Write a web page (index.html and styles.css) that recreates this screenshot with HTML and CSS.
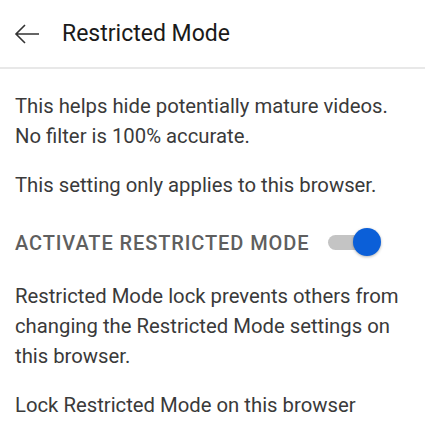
FILE: index.html
```html
<!DOCTYPE html>
<html>
<head>
<meta charset="utf-8">
<link rel="stylesheet" href="styles.css">
</head>
<body>
<div class="page">
  <header class="header">
    <svg class="back" width="28" height="22" viewBox="0 0 28 22">
      <path d="M26 11H3M12 2L3 11l9 9" fill="none" stroke="#333" stroke-width="1.6"/>
    </svg>
    <h1 class="title">Restricted Mode</h1>
  </header>
  <main class="content">
    <p class="text p1">This helps hide potentially mature videos.<br>No filter is 100% accurate.</p>
    <p class="text p2">This setting only applies to this browser.</p>
    <div class="toggle-row">
      <span class="label">ACTIVATE RESTRICTED MODE</span>
      <span class="toggle"><span class="track"></span><span class="thumb"></span></span>
    </div>
    <p class="text p3">Restricted Mode lock prevents others from changing the Restricted Mode settings on this browser.</p>
    <p class="text p4">Lock Restricted Mode on this browser</p>
  </main>
</div>
</body>
</html>
```
FILE: styles.css
```css
* { box-sizing: border-box; }
html, body { margin: 0; padding: 0; background: #fff; }
body { font-family: Roboto, "Noto Sans", sans-serif; }
.page { width: 425px; height: 442px; overflow: hidden; }
.header {
  height: 69px;
  display: flex;
  align-items: center;
  padding-left: 13px;
  border-bottom: 2px solid #e8e8e8;
}
.back { display: block; margin-right: 21px; }
.title { margin: 0; font-size: 23px; font-weight: 400; color: #1a1a1a; }
.content { padding: 0 15px; }
.text {
  margin: 0;
  font-size: 20.3px;
  line-height: 30px;
  color: #3a3a3a;
}
.p1 { margin-top: 22px; }
.p2 { margin-top: 19px; }
.p3 { margin-top: 20px; }
.p4 { margin-top: 19px; }
.toggle-row {
  display: flex;
  align-items: center;
  height: 36px;
  margin-top: 25px;
}
.label {
  font-size: 20px;
  font-weight: 500;
  letter-spacing: 0.9px;
  color: #5f5f5f;
}
.toggle { position: relative; width: 54px; height: 30px; margin-left: 19px; }
.track {
  position: absolute; left: 0; top: 7px;
  width: 46px; height: 15px; border-radius: 8px; background: #c4c4c4;
}
.thumb {
  position: absolute; left: 25px; top: 0;
  width: 28px; height: 28px; border-radius: 50%;
  background: #0b5fd8;
  box-shadow: 0 1px 3px rgba(0,0,0,0.3);
}
```
